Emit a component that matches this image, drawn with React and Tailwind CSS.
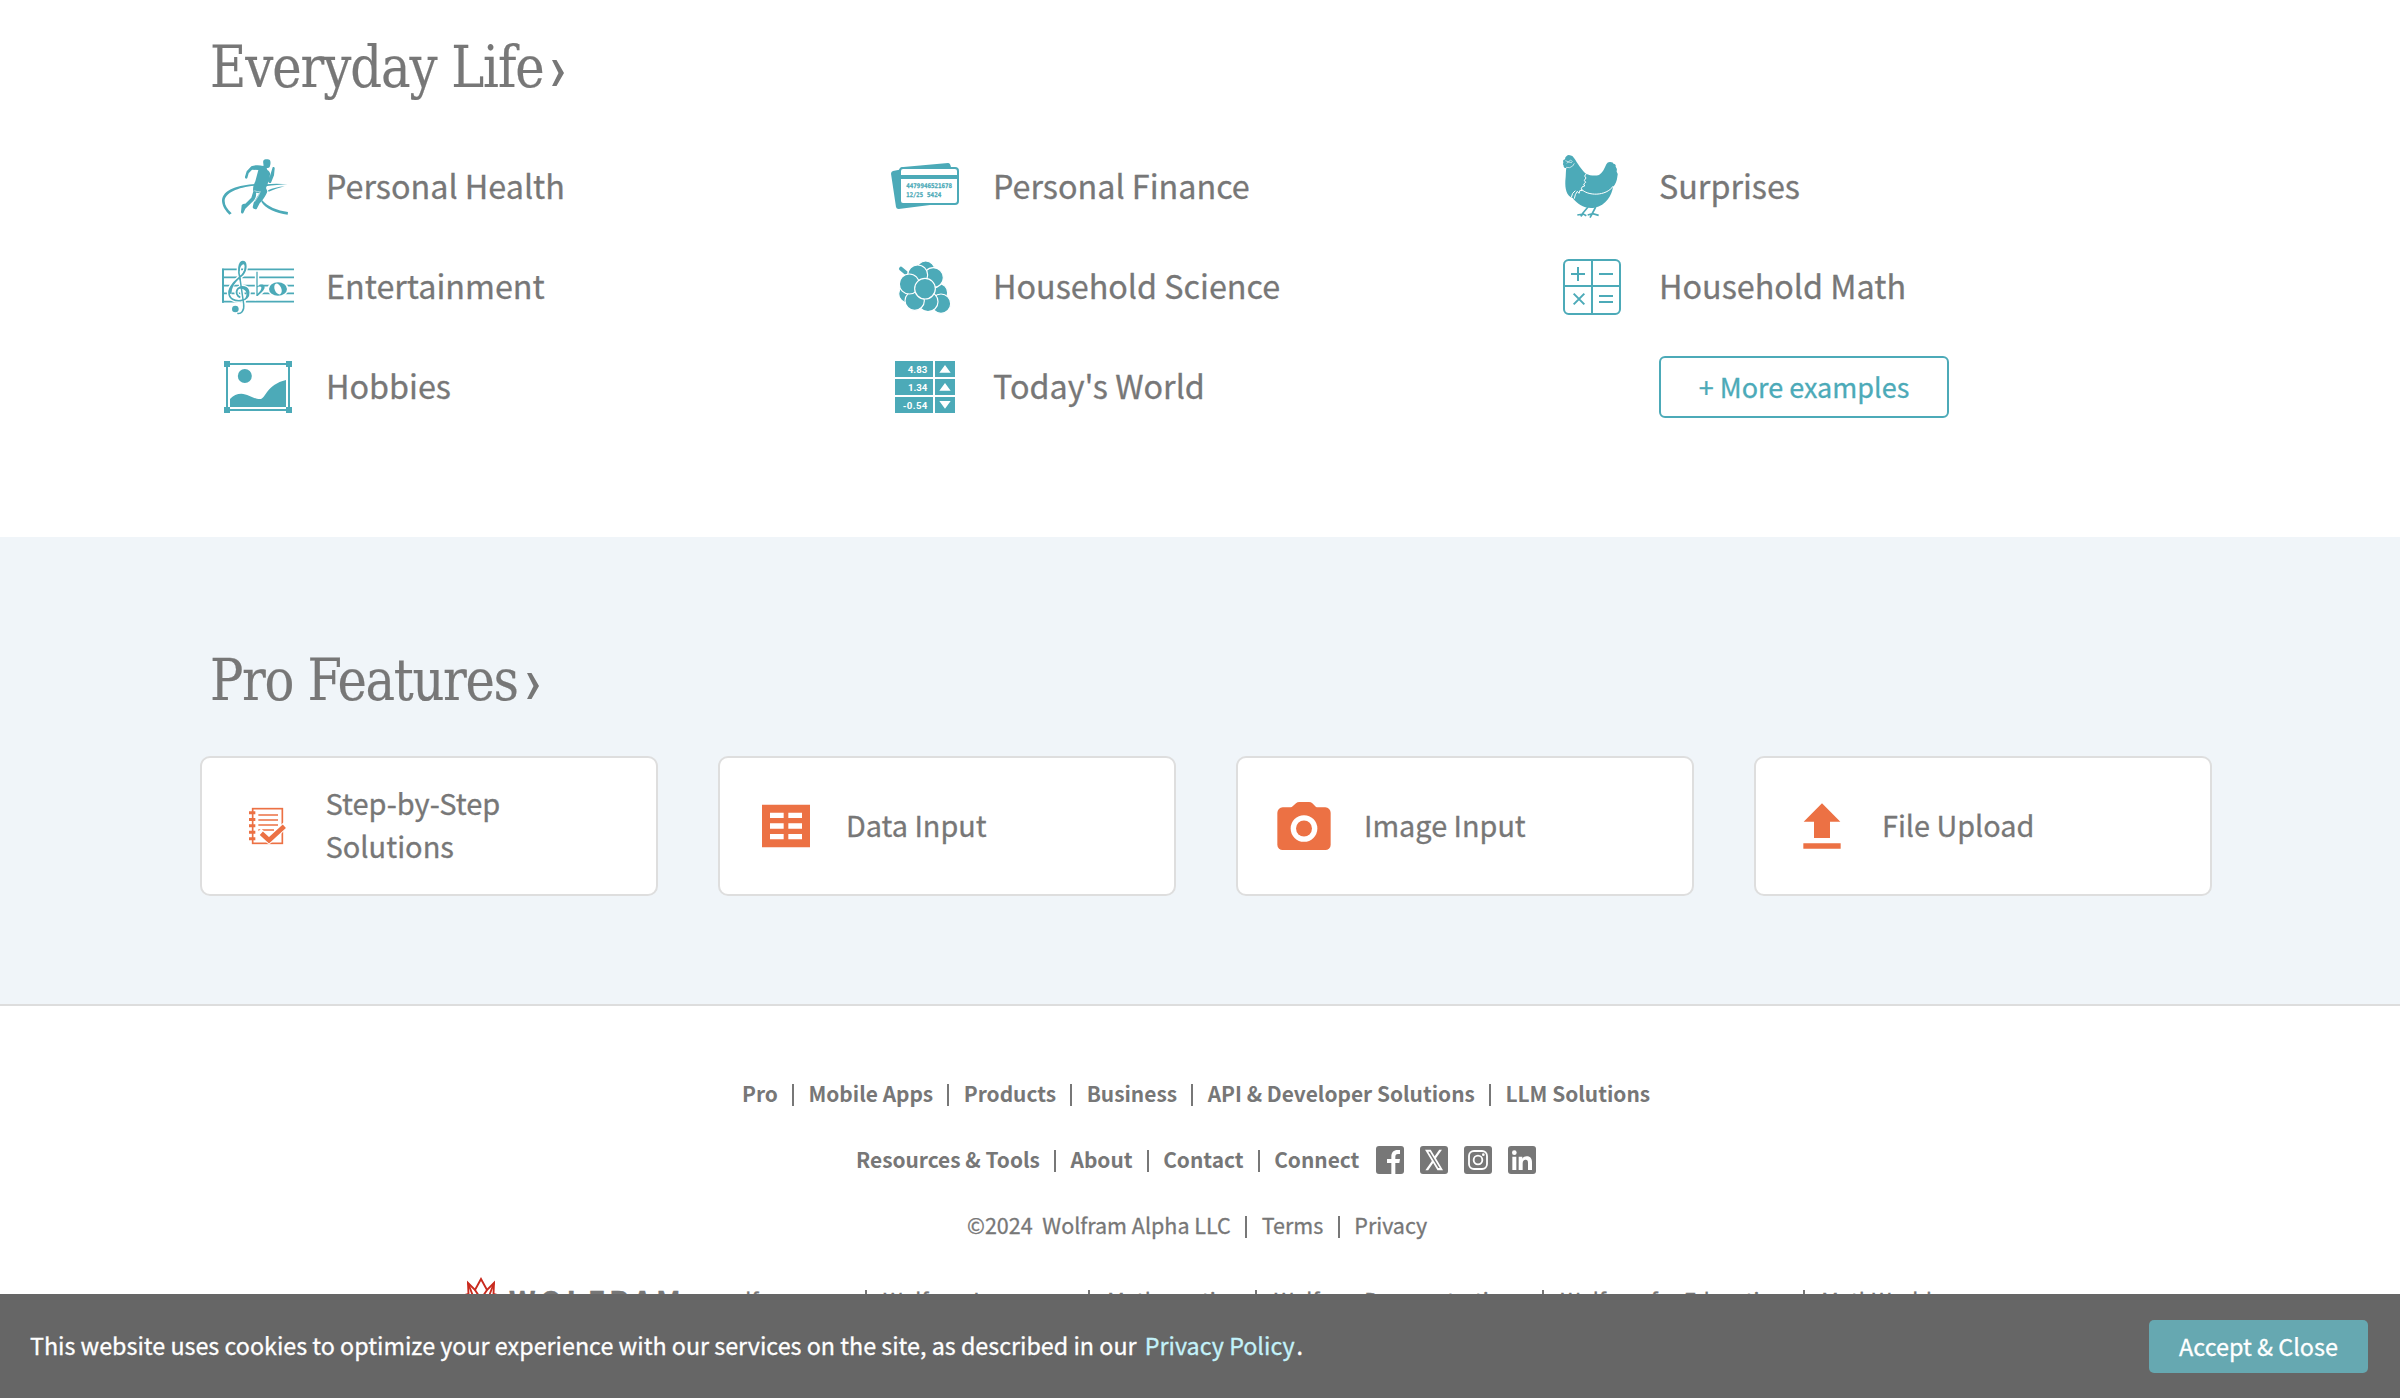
import React from "react";

const TEAL = "#4caab8";
const ORANGE = "#ec7144";
const GRAY = "#777777";

/* ---------- topic icons ---------- */

function TopicSvg({ viewBox, children }) {
  return (
    <svg viewBox={viewBox} className="h-[100px] w-[100px] shrink-0" fill={TEAL}>
      {children}
    </svg>
  );
}

function RunnerIcon() {
  return (
    <TopicSvg viewBox="30 345 300 300">
      <path d="M196 492C148 495 96 508 96 543C97 560 108 574 118 584L125 580C112 568 104 556 104 543C105 518 142 502 194 497Z" />
      <path d="M228 493C252 490 274 491 293 493C272 494 250 496 226 499Z" />
      <path d="M234 511C248 504 264 501 284 499C266 504 250 509 236 515Z" />
      <path d="M216 540C232 560 262 572 294 576L293 584C258 579 226 566 214 545Z" />
      <path d="M220 422C222 417 236 416 240 421C243 427 241 436 239 441C236 445 232 444 230 444L232 450C238 453 241 458 240 464L238 474L248 442C250 440 255 442 254 446L252 466L243 488C240 491 235 488 236 484L228 504L232 514C230 524 216 544 209 550L200 567C196 570 189 566 188 562L191 548L208 520L198 518C200 530 194 540 186 547L166 566L160 579C157 583 152 579 153 575L155 556C157 551 162 551 166 551L184 533L190 514C187 504 192 492 196 484L205 450L186 449L176 460L172 474C169 479 164 475 165 470L170 454L184 439C192 435 208 434 220 438C222 434 218 428 220 422Z" />
      <path d="M193 512Q202 516 209 515M211 514Q208 526 194 545" fill="none" stroke="#fff" strokeWidth="1.6" />
    </TopicSvg>
  );
}

function MusicIcon() {
  const clef =
    "M121 150C112 122 117 96 128 95C140 95 141 119 128 134C108 152 87 168 87 188C87 206 104 214 122 212C139 210 147 199 146 187C144 170 124 166 114 176C105 186 111 199 121 202";
  return (
    <TopicSvg viewBox="0 15 300 300">
      <path d="M66 118H282M66 142H282M66 167H282M66 190H282M66 215H282" stroke={TEAL} strokeWidth="5" />
      <path d="M69 116V218" stroke={TEAL} strokeWidth="6" />
      <g stroke="#fff" strokeWidth="13" fill="none">
        <path d={clef} />
        <path d="M121 148L132 224" />
        <path d="M171 125V198L190 180" />
      </g>
      <ellipse cx="234" cy="177" rx="32" ry="24" fill="#fff" />
      <path d={clef} fill="none" stroke={TEAL} strokeWidth="5" />
      <path d="M116 122C117 102 124 93 129 94C139 97 141 117 130 133C114 146 96 168 95 186C92 196 87 192 87 186C88 168 106 154 122 139C132 128 137 112 132 103C124 103 120 112 119 124Z" />
      <path d="M114 176C124 166 146 170 147 188C146 200 140 208 130 211C140 202 142 190 136 182C130 176 120 174 114 176Z" />
      <path d="M120 146L131 222C134 243 122 253 112 250" fill="none" stroke={TEAL} strokeWidth="4.500" />
      <circle cx="106" cy="237" r="10" />
      <path d="M169 125H173V168C182 160 198 162 193 176C190 184 178 192 173 198H169ZM173 172V191C180 185 185 178 184 171C182 167 177 168 173 172Z" fillRule="evenodd" />
      <ellipse cx="234" cy="177" rx="27" ry="20" />
      <ellipse cx="234" cy="177" rx="10" ry="17" fill="#fff" transform="rotate(-22 234 177)" />
    </TopicSvg>
  );
}

function PictureIcon() {
  return (
    <TopicSvg viewBox="0 315 300 300">
      <rect x="81" y="402" width="186" height="138" fill="none" stroke={TEAL} strokeWidth="6" />
      <path d="M72 393h18v18H72zM258 393h18v18h-18zM72 531h18v18H72zM258 531h18v18h-18z" />
      <circle cx="134.500" cy="438" r="21" />
      <path d="M90 531V507C99 496 112 491 124 491C146 492 162 508 182 507C198 504 200 464 258 450V531Z" />
    </TopicSvg>
  );
}

function CardsIcon() {
  return (
    <TopicSvg viewBox="-9 -15 300 300">
      <path d="M69 93L88 89Q90 82 100 81L234 69Q241 69 243 82V194L180 195L86 207Q79 207 78 201L63 101Q63 95 69 93Z" />
      <rect x="90" y="84" width="174" height="108" rx="9" fill="#fff" stroke={TEAL} strokeWidth="6" />
      <rect x="88" y="105" width="178" height="12" />
      <g fontFamily="'DejaVu Sans Mono', monospace" fontWeight="700" fontSize="19.500" stroke={TEAL} strokeWidth="0.8">
        <text x="109" y="143" textLength="137" lengthAdjust="spacingAndGlyphs">4479946521678</text>
        <text x="109" y="170" textLength="50" lengthAdjust="spacingAndGlyphs">12/25</text>
        <text x="171" y="170" textLength="43" lengthAdjust="spacingAndGlyphs">5424</text>
      </g>
    </TopicSvg>
  );
}

function GrapesIcon() {
  const grapes = [
    [167, 391, 28],
    [205, 458, 28],
    [114, 461, 28],
    [213, 491, 29],
    [174, 485, 30],
    [190, 413, 30],
    [143, 405, 30],
    [134, 482, 29],
    [118, 432, 30],
    [165, 446, 31],
  ];
  return (
    <TopicSvg viewBox="-9 285 300 300">
      <path d="M93 386L112 402" stroke={TEAL} strokeWidth="12" strokeLinecap="round" />
      {grapes.map(([x, y, r]) => (
        <circle key={`${x}-${y}`} cx={x} cy={y} r={r} stroke="#fff" strokeWidth="3.500" />
      ))}
    </TopicSvg>
  );
}

function TickerIcon() {
  return (
    <TopicSvg viewBox="-9 585 300 300">
      <path d="M75 663h114v48H75zM195 663h60v48h-60zM75 717h114v48H75zM195 717h60v48h-60zM75 771h114v48H75zM195 771h60v48h-60z" />
      <g fill="#fff" fontFamily="Roboto, sans-serif" fontWeight="700" fontSize="29">
        <text x="113" y="698" textLength="59">4.83</text>
        <text x="114" y="752" textLength="58">1.34</text>
        <text x="98" y="806" textLength="74">-0.54</text>
      </g>
      <path fill="#fff" d="M208 698L225 675L242 698ZM208 752L225 729L242 752ZM208 783L225 806L242 783Z" />
    </TopicSvg>
  );
}

function HenIcon() {
  return (
    <TopicSvg viewBox="-21 -15 300 300">
      <path d="M80 48Q84 44 90 46Q98 47 102 54C112 68 124 90 138 101C150 107 166 108 177 105C188 99 192 88 199 73Q203 65 211 66Q220 66 220 71Q229 72 227 80Q233 86 230 95Q236 102 232 110C231 122 226 134 219 141C216 165 198 197 164 203C135 208 112 192 98 174C79 168 75 145 76 122C78 106 77 95 79 84Q70 84 71 77Q67 74 70 67Q67 60 75 58Q75 50 80 48Z" />
      <g fill="none" stroke="#fff" strokeWidth="3">
        <path d="M139 101L134 108L138 114L133 121L137 127L131 132L134 138L127 140L124 146L127 152L120 151L117 160L112 154L106 164L103 176M106 152L98 160L94 172" />
        <path d="M124 147C142 168 198 170 220 138" />
        <path d="M78 82Q90 86 98 78L103 70" strokeWidth="2" />
        <path d="M76 62L84 65M80 70L92 60L98 66M84 66L96 68" strokeWidth="1.800" />
      </g>
      <path d="M144 201L127 221M112 225L130 222L139 227M122 229L130 221M167 201L156 222M143 225L158 221L176 226M150 233L157 221" fill="none" stroke={TEAL} strokeWidth="5" />
    </TopicSvg>
  );
}

function CalculatorIcon() {
  return (
    <TopicSvg viewBox="-21 285 300 300">
      <g fill="none" stroke={TEAL} strokeWidth="6">
        <rect x="72" y="360" width="168" height="162" rx="14" />
        <path d="M156 360V522M72 438H240M93 402H135M114 381V423M177 402H219M101 461L133 493M133 461L101 493M177 468H219M177 486H219" />
      </g>
    </TopicSvg>
  );
}

/* ---------- pro feature icons ---------- */

function ProSvg({ viewBox, children }) {
  return (
    <svg viewBox={viewBox} className="h-[136px] w-[120px] shrink-0" fill={ORANGE}>
      {children}
    </svg>
  );
}

function NotebookIcon() {
  return (
    <ProSvg viewBox="36 414 360 408">
      <rect x="188" y="566" width="89" height="104" fill="none" stroke={ORANGE} strokeWidth="5" />
      <path d="M177 574h19v9h-19zM177 594h19v9h-19zM177 613h19v9h-19zM177 632h19v9h-19zM177 652h19v9h-19z" />
      <path d="M205 585H264M205 600H264M205 615H264M205 630H252" stroke={ORANGE} strokeWidth="4.500" />
      <path d="M214 640L237 661L283 619" fill="none" stroke="#fff" strokeWidth="20" strokeLinecap="square" />
      <path d="M214 640L237 661L283 619" fill="none" stroke={ORANGE} strokeWidth="14" />
    </ProSvg>
  );
}

function TableIcon() {
  return (
    <ProSvg viewBox="30 54 360 408">
      <path d="M156 194h144v128H156z" />
      <path fill="#fff" d="M180 218h41v16h-41zM235 218h41v16h-41zM180 250h41v16h-41zM235 250h41v16h-41zM180 282h41v16h-41zM235 282h41v16h-41z" />
    </ProSvg>
  );
}

function CameraIcon() {
  return (
    <ProSvg viewBox="54 54 360 408">
      <rect x="172" y="202" width="160" height="128" rx="16" />
      <path d="M212 204L228 190Q232 186 238 186H267Q273 186 277 190L291 204Z" />
      <circle cx="252" cy="265.500" r="40" fill="#fff" />
      <circle cx="252" cy="265.500" r="24" />
    </ProSvg>
  );
}

function UploadIcon() {
  return (
    <ProSvg viewBox="48 54 360 408">
      <path d="M246 190L301 245H270V294H222V245H191ZM190 310H302V326H190Z" />
    </ProSvg>
  );
}

/* ---------- social icons ---------- */

function SocialSvg({ children }) {
  return (
    <svg viewBox="0 0 84 84" className="h-[28px] w-[28px]" fill="#fff">
      <rect width="84" height="84" rx="9" fill={GRAY} />
      {children}
    </svg>
  );
}

function SocialIcons() {
  return (
    <div className="ml-[2.500px] flex gap-4">
      <SocialSvg>
        <path d="M46 84V51H33V39H46V32C46 18 54 12 64 12H72V24H66C60 24 58 27 58 33V39H72L70 51H58V84Z" />
      </SocialSvg>
      <SocialSvg>
        <path
          transform="translate(12 4) scale(2.5 3.15)"
          d="M18.244 2.250h3.308l-7.227 8.260 8.502 11.240H16.170l-5.214-6.817L4.990 21.750H1.680l7.730-8.835L1.254 2.250H8.080l4.713 6.231zm-1.161 17.520h1.833L7.084 4.126H5.117z"
        />
      </SocialSvg>
      <SocialSvg>
        <g fill="none" stroke="#fff" strokeWidth="5.500">
          <rect x="15" y="15" width="54" height="54" rx="15" />
          <circle cx="42" cy="42" r="13" />
        </g>
        <circle cx="58" cy="26" r="4" />
      </SocialSvg>
      <SocialSvg>
        <circle cx="19" cy="20" r="7" />
        <path d="M13 32h12v40H13zM32 32h11v6c3-5 8-7 13-7 12 0 16 8 16 19v22H60V52c0-7-1-11-7-11s-9 4-9 11v20H32z" />
      </SocialSvg>
    </div>
  );
}

/* ---------- building blocks ---------- */

function SectionTitle({ children, className }) {
  return (
    <h2 className="flex h-[60px] items-center pl-[9.500px]">
      <span
        className={`${className} origin-left scale-x-[0.96] pt-px font-['DejaVu_Serif_Condensed','DejaVu_Serif',serif] text-[57.500px] leading-[60px] font-normal whitespace-nowrap [-webkit-text-stroke:0.200px]`}
      >
        {children}
      </span>
      <svg viewBox="0 0 12 26" className="mt-[12px] h-[26px] w-[12px]" fill={GRAY}>
        <path d="M0 0H4.500L12 13L4.500 26H0L6.500 13Z" />
      </svg>
    </h2>
  );
}

function Topic({ icon, label }) {
  return (
    <a className="flex h-[100px] items-center">
      {icon}
      <span className="pl-[26px] text-[32.300px] whitespace-nowrap">{label}</span>
    </a>
  );
}

function ProCard({ icon, label, className = "pl-[6px] text-[28.800px]" }) {
  return (
    <a className="flex h-[140px] w-[458px] items-center rounded-[10px] border-2 border-[#dedede] bg-white">
      {icon}
      <span className={`${className} pb-[4px] leading-[43px]`}>{label}</span>
    </a>
  );
}

function Sep() {
  return <span className="mt-[3px] h-[22px] w-[2px] shrink-0 bg-[#777777]" />;
}

function LinkRow({ items, className, children }) {
  return (
    <div className={className}>
      {items.map((item, i) => (
        <React.Fragment key={item}>
          {i > 0 && <Sep />}
          <a className="whitespace-nowrap">{item}</a>
        </React.Fragment>
      ))}
      {children}
    </div>
  );
}

function Spikey() {
  return (
    <svg viewBox="0 0 50 50" className="mt-[3px] h-[50px] w-[50px]" fill="none" stroke="#c92a1e" strokeWidth="1.900">
      <path d="M25 2L19 13L12 6L12.500 17L2 20L9 28L3 38L14 38L16 48L25 42L34 48L36 38L47 38L41 28L48 20L37.500 17L38 6L31 13Z" />
      <path d="M19 13L25 22L31 13M12 6L17 19L25 22L33 19L38 6M2 20L17 19L15 29L25 22L35 29L33 19L48 20M15 29L25 35L35 29" />
    </svg>
  );
}

export default function App() {
  return (
    <div className="relative h-[1398px] w-[2400px] overflow-hidden bg-white font-['Noto_Sans_CJK_JP','Noto_Sans',sans-serif] text-[#777777] [-webkit-text-stroke:0.300px]">
      <section className="h-[537px] px-[200px] pt-[37px]">
        <SectionTitle className="w-[342px] tracking-[-1.100px]">Everyday Life</SectionTitle>
        <div className="mt-[38px] grid grid-cols-[667px_666px_667px]">
          <Topic icon={<RunnerIcon />} label="Personal Health" />
          <Topic icon={<CardsIcon />} label="Personal Finance" />
          <Topic icon={<HenIcon />} label="Surprises" />
          <Topic icon={<MusicIcon />} label="Entertainment" />
          <Topic icon={<GrapesIcon />} label="Household Science" />
          <Topic icon={<CalculatorIcon />} label="Household Math" />
          <Topic icon={<PictureIcon />} label="Hobbies" />
          <Topic icon={<TickerIcon />} label="Today's World" />
          <div className="pt-[21px] pl-[126px]">
            <button className="flex h-[62px] w-[290px] items-center justify-center rounded-[6px] border-2 border-[#4caab8] text-[27px] whitespace-nowrap text-[#4caab8]">
              + More examples
            </button>
          </div>
        </div>
      </section>

      <section className="h-[469px] border-b-2 border-[#dddddd] bg-[#f0f5f9] pt-[113px] pl-[200px]">
        <SectionTitle className="w-[317px] tracking-[-1.400px]">Pro Features</SectionTitle>
        <div className="mt-[46px] flex gap-[60px]">
          <ProCard icon={<NotebookIcon />} className="pr-[100px] pl-[3.500px] text-[29px]" label="Step-by-Step Solutions" />
          <ProCard icon={<TableIcon />} label="Data Input" />
          <ProCard icon={<CameraIcon />} label="Image Input" />
          <ProCard icon={<UploadIcon />} label="File Upload" />
        </div>
      </section>

      <footer className="pt-[54px] text-[21.500px]">
        <LinkRow
          className="flex h-[66px] items-center gap-[14.300px] pt-px pl-[742px] text-[20.900px] font-bold [-webkit-text-stroke:0]"
          items={["Pro", "Mobile Apps", "Products", "Business", "API & Developer Solutions", "LLM Solutions"]}
        />
        <LinkRow
          className="flex h-[66px] items-center gap-[14.300px] pt-px pl-[856px] text-[20.900px] font-bold [-webkit-text-stroke:0]"
          items={["Resources & Tools", "About", "Contact", "Connect"]}
        >
          <SocialIcons />
        </LinkRow>
        <LinkRow
          className="flex h-[66px] items-center gap-[14.500px] pl-[967px]"
          items={["©2024\u00a0\u00a0Wolfram Alpha LLC", "Terms", "Privacy"]}
        />
        <div className="flex h-[84px] items-center pl-[456px]">
          <Spikey />
          <span className="w-[209px] pt-[2px] pl-[3px] text-[29px] font-bold tracking-[4.400px]">WOLFRAM</span>
          <LinkRow
            className="flex items-center gap-[16.800px] text-[21.600px]"
            items={["wolfram.com", "Wolfram Language", "Mathematica", "Wolfram Demonstrations", "Wolfram for Education", "MathWorld"]}
          />
        </div>
      </footer>

      <div className="absolute inset-x-0 bottom-0 flex h-[104px] items-center justify-between bg-[#666666] pr-[32px] pl-[30px] text-[23.300px] text-white">
        <p className="pb-[2px] whitespace-nowrap">
          This website uses cookies to optimize your experience with our services on the site, as described in our{" "}
          <a className="mr-[2px] ml-[3px] text-[#c3f2fa]">Privacy Policy</a>.
        </p>
        <button className="flex h-[53px] w-[219px] items-center justify-center rounded-[5px] bg-[#66a8b1] pt-px text-[23.400px] whitespace-nowrap">
          Accept &amp; Close
        </button>
      </div>
    </div>
  );
}
